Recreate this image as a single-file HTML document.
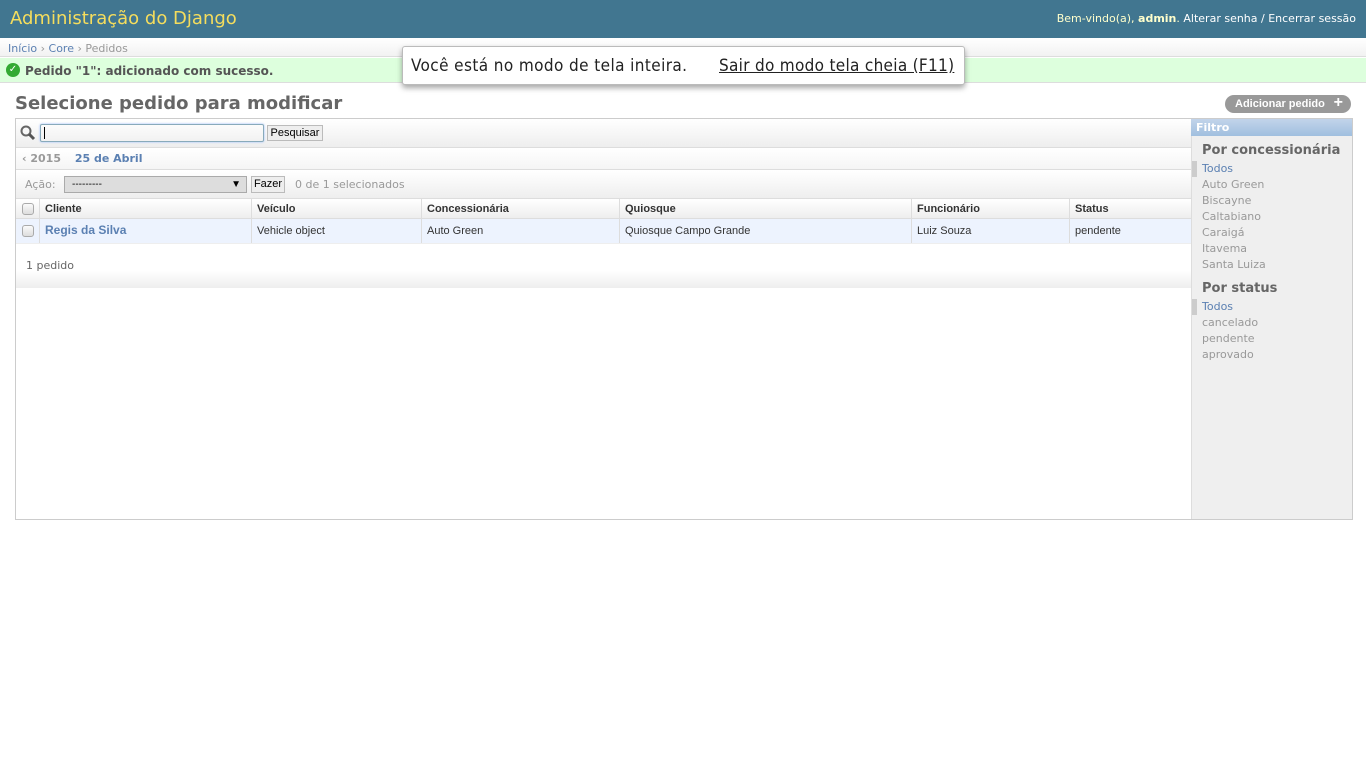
<!DOCTYPE html>
<html><head><meta charset="utf-8"><style>
*{box-sizing:border-box;margin:0;padding:0}
body{width:1366px;height:768px;background:#fff;font-family:"DejaVu Sans",sans-serif;font-size:11px;color:#333;position:relative;overflow:hidden}
.a{position:absolute;white-space:nowrap}
a{color:#5b80b2;text-decoration:none}
.hd{left:0;top:0;width:1366px;height:38px;background:#417690}
.cell{position:absolute;top:0;height:100%;border-left:1px solid #ddd;padding-left:5px;font-family:"Liberation Sans",sans-serif;font-size:11px;line-height:21px}
.cb{position:absolute;width:12px;height:12px;border:1px solid #aaa;border-radius:3px;background:linear-gradient(#fafafa,#ddd)}
.fl{font-size:11px;color:#999;line-height:16px}
</style></head><body>
<div class="a hd"></div>
<div class="a" style="left:10px;top:8px;font-size:18px;color:#f5dd5d">Administração do Django</div>
<div class="a" style="right:10px;top:12px;font-size:11px;color:#ffc">Bem-vindo(a), <b>admin</b>. <span style="color:#fff">Alterar senha / Encerrar sessão</span></div>
<div class="a" style="left:0;top:38px;width:1366px;height:19px;background:linear-gradient(#fff,#f2f2f2);border-bottom:1px solid #ddd"></div>
<div class="a" style="left:8px;top:42px;font-size:11px;color:#999"><a>Início</a> › <a>Core</a> › Pedidos</div>
<div class="a" style="left:0;top:58px;width:1366px;height:25px;background:#dfd;border-bottom:1px solid #ddd"></div>
<div class="a" style="left:6px;top:63px;width:14px;height:14px;border-radius:50%;background:#3a3;color:#fff;font-size:10px;text-align:center;line-height:14px">✓</div>
<div class="a" style="left:25px;top:64px;font-size:12px;font-weight:bold;color:#555">Pedido "1": adicionado com sucesso.</div>
<div class="a" style="left:402px;top:46px;width:563px;height:39px;background:#fff;border:1px solid #bbb;border-radius:3px;box-shadow:0 3px 6px rgba(0,0,0,.35);font-family:'DejaVu Sans Condensed','DejaVu Sans',sans-serif;font-size:17px;color:#222;line-height:38px">
<span style="position:absolute;left:8px;letter-spacing:.4px">Você está no modo de tela inteira.</span>
<span style="position:absolute;left:316px;text-decoration:underline;letter-spacing:.3px">Sair do modo tela cheia (F11)</span></div>
<div class="a" style="left:15px;top:93px;font-size:18px;font-weight:bold;color:#666">Selecione pedido para modificar</div>
<div class="a" style="left:1225px;top:95px;width:126px;height:18px;border-radius:9px;background:#999;color:#fff;font-family:'Liberation Sans',sans-serif;font-weight:bold;font-size:11px;line-height:18px;padding-left:10px">Adicionar pedido <span style="font-size:16px;position:absolute;right:8px;top:-1px">+</span></div>
<div class="a" style="left:15px;top:118px;width:1338px;height:402px;border:1px solid #ccc"></div>
<div class="a" style="left:16px;top:119px;width:1175px;height:29px;background:linear-gradient(#fff,#eee);border-bottom:1px solid #ddd"></div>
<svg class="a" style="left:20px;top:125px" width="16" height="16"><circle cx="6" cy="6" r="4.5" fill="none" stroke="#666" stroke-width="2"/><path d="M9 9 L14 14" stroke="#555" stroke-width="3"/></svg>
<div class="a" style="left:40px;top:124px;width:224px;height:18px;border:1px solid #8ab;border-radius:2px;box-shadow:0 0 2px #9bf"><div style="position:absolute;left:3px;top:2px;width:1px;height:12px;background:#000"></div></div>
<div class="a" style="left:267px;top:125px;width:56px;height:16px;border:1px solid #bbb;background:#eee;font-family:'Liberation Sans',sans-serif;font-size:11px;color:#000;text-align:center;line-height:14px">Pesquisar</div>
<div class="a" style="left:16px;top:149px;width:1175px;height:21px;background:linear-gradient(#fff,#f5f5f5);border-bottom:1px solid #ddd"></div>
<div class="a" style="left:22px;top:152px;font-size:11px;font-weight:bold;color:#999">‹ 2015 <a style="margin-left:10px">25 de Abril</a></div>
<div class="a" style="left:16px;top:171px;width:1175px;height:28px;background:linear-gradient(#fff,#eee);border-bottom:1px solid #ddd"></div>
<div class="a" style="left:25px;top:178px;font-size:11px;color:#999">Ação:</div>
<div class="a" style="left:64px;top:176px;width:183px;height:17px;border:1px solid #aaa;background:#ddd;font-family:'Liberation Sans',sans-serif;font-size:10px;color:#000;padding-left:7px;line-height:15px">---------<span style="position:absolute;right:5px">▼</span></div>
<div class="a" style="left:251px;top:176px;width:34px;height:17px;border:1px solid #bbb;background:#eee;font-family:'Liberation Sans',sans-serif;font-size:11px;color:#000;text-align:center;line-height:15px">Fazer</div>
<div class="a" style="left:295px;top:178px;font-size:11px;color:#999">0 de 1 selecionados</div>
<div class="a" style="left:16px;top:199px;width:1175px;height:20px;background:linear-gradient(#fff,#eee);border-bottom:1px solid #ddd;font-weight:bold;color:#333">
<div class="cb" style="left:6px;top:4px"></div>
<div class="cell" style="left:23px;font-weight:bold">Cliente</div><div class="cell" style="left:235px;font-weight:bold">Veículo</div><div class="cell" style="left:405px;font-weight:bold">Concessionária</div><div class="cell" style="left:603px;font-weight:bold">Quiosque</div><div class="cell" style="left:895px;font-weight:bold">Funcionário</div><div class="cell" style="left:1053px;font-weight:bold">Status</div></div>
<div class="a" style="left:16px;top:219px;width:1175px;height:25px;background:#edf3fe;border-bottom:1px solid #eee">
<div class="cb" style="left:6px;top:6px"></div>
<div class="cell" style="left:23px;line-height:22px;font-weight:bold;font-size:12px;color:#5b80b2">Regis da Silva</div><div class="cell" style="left:235px;line-height:24px">Vehicle object</div><div class="cell" style="left:405px;line-height:24px">Auto Green</div><div class="cell" style="left:603px;line-height:24px">Quiosque Campo Grande</div><div class="cell" style="left:895px;line-height:24px">Luiz Souza</div><div class="cell" style="left:1053px;line-height:24px">pendente</div></div>
<div class="a" style="left:16px;top:245px;width:1175px;height:43px;background:linear-gradient(#fff 60%,#eee)"></div>
<div class="a" style="left:26px;top:259px;font-size:11px;color:#666">1 pedido</div>
<div class="a" style="left:1191px;top:119px;width:161px;height:400px;background:#efefef;border-left:1px solid #ddd"></div>
<div class="a" style="left:1191px;top:119px;width:161px;height:17px;background:linear-gradient(#c2d4ea,#a0bfdf);color:#fff;font-weight:bold;font-size:11px;padding-left:5px;line-height:17px">Filtro</div>
<div class="a" style="left:1202px;top:143px;font-size:13px;font-weight:bold;color:#666">Por concessionária</div>
<div class="a" style="left:1192px;top:161px;width:5px;height:16px;background:#ccc"></div>
<div class="a fl" style="left:1202px;top:161px"><a>Todos</a><br>Auto Green<br>Biscayne<br>Caltabiano<br>Caraigá<br>Itavema<br>Santa Luiza</div>
<div class="a" style="left:1202px;top:281px;font-size:13px;font-weight:bold;color:#666">Por status</div>
<div class="a" style="left:1192px;top:299px;width:5px;height:16px;background:#ccc"></div>
<div class="a fl" style="left:1202px;top:299px"><a>Todos</a><br>cancelado<br>pendente<br>aprovado</div>
</body></html>
